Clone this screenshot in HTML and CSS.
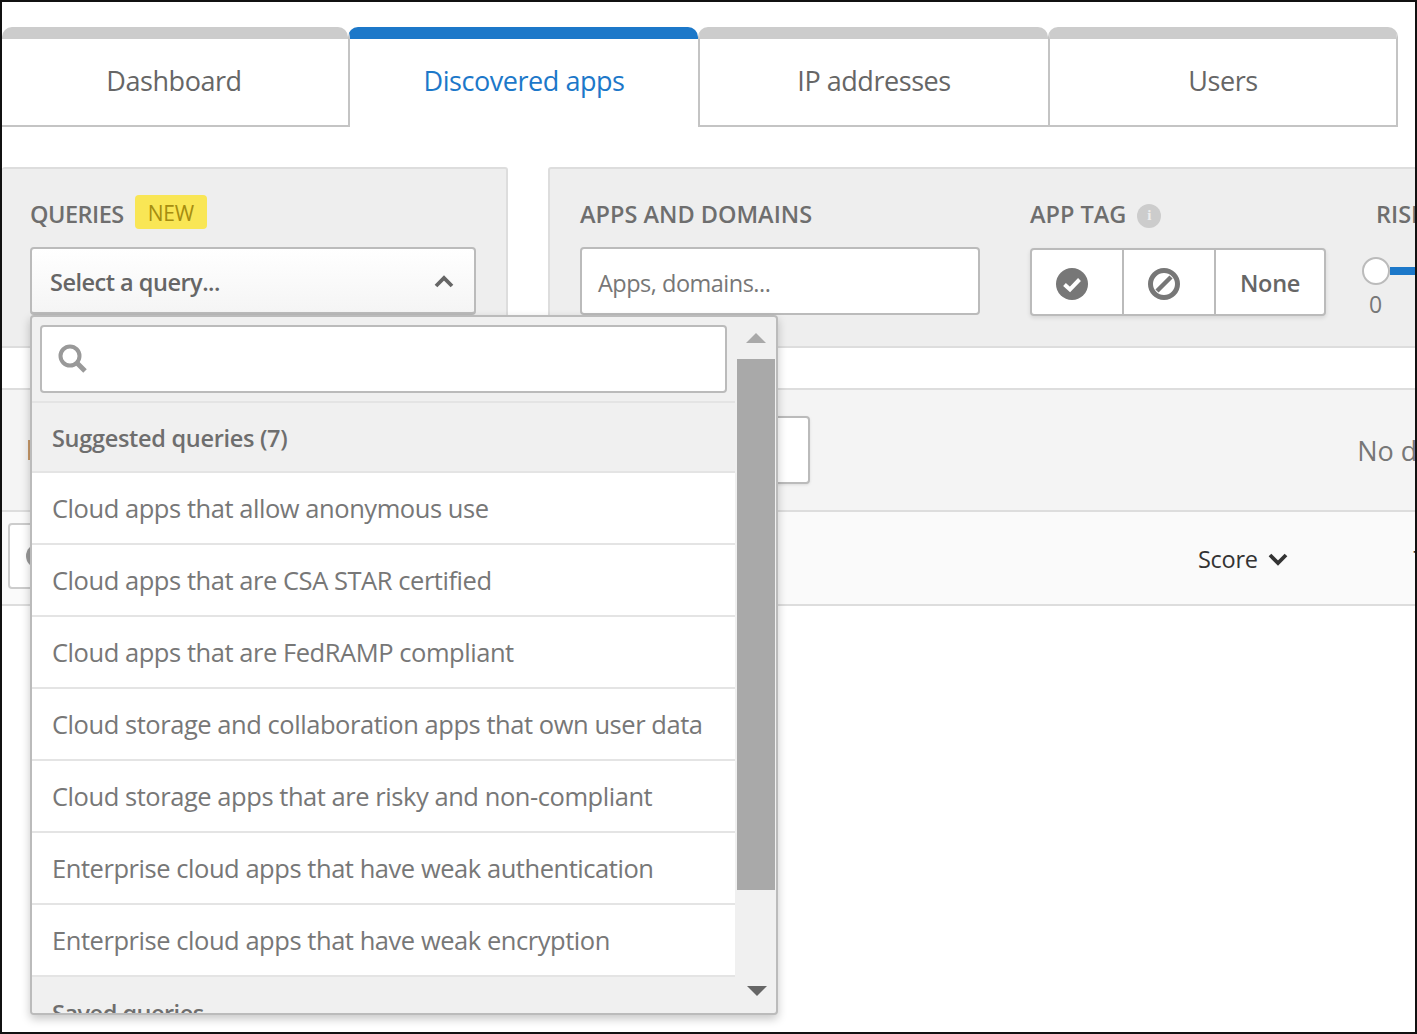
FILE: index.html
```html
<!DOCTYPE html>
<html lang="en">
<head>
    <meta charset="UTF-8">
    <meta name="viewport" content="width=device-width, initial-scale=1.0">
    <title>Discovered apps</title>
    <link rel="stylesheet" href="styles.css">
</head>
<body>
    <div class="frame">
        <nav class="tabs">
            <a class="tab first">Dashboard</a>
            <a class="tab active">Discovered apps</a>
            <a class="tab">IP addresses</a>
            <a class="tab last">Users</a>
        </nav>

        <section class="filters">
            <div class="panel panel-queries">
                <div class="label-row queries-label">
                    <span class="label label-tight">QUERIES</span>
                    <span class="new-badge">NEW</span>
                </div>
                <div class="query-select">
                    <span>Select a query...</span>
                    <svg class="chevron" width="20" height="13" viewBox="0 0 20 13"><path d="M2 11 L10 3 L18 11" fill="none" stroke="#666" stroke-width="3.8"/></svg>
                </div>
            </div>
            <div class="panel panel-apps">
                <div class="field field-apps">
                    <span class="label">APPS AND DOMAINS</span>
                    <div class="text-input">Apps, domains...</div>
                </div>
                <div class="field field-tag">
                    <div class="label-row tag-label">
                        <span class="label">APP TAG</span>
                        <span class="info">i</span>
                    </div>
                    <div class="tag-group">
                        <div class="tag-btn tag-check">
                            <svg width="32" height="32" viewBox="0 0 32 32"><circle cx="16" cy="16" r="16" fill="#777"/><path d="M8.5 16.5 L14 21.5 L23.5 11.5" fill="none" stroke="#fff" stroke-width="4"/></svg>
                        </div>
                        <div class="tag-btn tag-check">
                            <svg width="32" height="32" viewBox="0 0 32 32"><circle cx="16" cy="16" r="13.5" fill="none" stroke="#777" stroke-width="5"/><path d="M9 23 L23 9" stroke="#777" stroke-width="4.5"/></svg>
                        </div>
                        <div class="tag-btn tag-none">None</div>
                    </div>
                </div>
                <div class="field field-risk">
                    <span class="label">RISK SCORE</span>
                    <div class="slider">
                        <span class="knob"></span>
                        <span class="track"></span>
                    </div>
                    <span class="slider-min">0</span>
                </div>
            </div>
        </section>

        <section class="toolbar">
            <span class="toolbar-tick"></span>
            <div class="toolbar-box"></div>
            <span class="no-data">No data</span>
        </section>

        <section class="table-head">
            <div class="head-box"><span class="head-circle"></span></div>
            <div class="head-score">Score
                <svg width="20" height="14" viewBox="0 0 20 14"><path d="M2 3 L10 11 L18 3" fill="none" stroke="#333" stroke-width="3.8"/></svg>
            </div>
            <span class="head-next">T</span>
        </section>

        <div class="dropdown">
            <div class="dropdown-scroll">
                <div class="search-wrap">
                    <div class="search-box">
                        <svg width="32" height="30" viewBox="0 0 32 30"><circle cx="13" cy="12" r="9.5" fill="none" stroke="#999" stroke-width="4"/><path d="M19.5 18.5 L28 27" stroke="#999" stroke-width="5"/></svg>
                    </div>
                </div>
                <div class="group-title">Suggested queries (7)</div>
                <div class="option">Cloud apps that allow anonymous use</div>
                <div class="option">Cloud apps that are CSA STAR certified</div>
                <div class="option">Cloud apps that are FedRAMP compliant</div>
                <div class="option">Cloud storage and collaboration apps that own user data</div>
                <div class="option">Cloud storage apps that are risky and non-compliant</div>
                <div class="option">Enterprise cloud apps that have weak authentication</div>
                <div class="option">Enterprise cloud apps that have weak encryption</div>
                <div class="group-title saved">Saved queries</div>
            </div>
            <div class="scrollbar">
                <span class="arrow-up"></span>
                <span class="thumb"></span>
                <span class="arrow-down"></span>
            </div>
        </div>
    </div>
</body>
</html>
```

FILE: styles.css
```css
* {
    box-sizing: border-box;
}

html, body {
    margin: 0;
    padding: 0;
}

body {
    font-family: "Open Sans", "Noto Sans", sans-serif;
    background-color: #fff;
    color: #666;
}

.frame {
    position: relative;
    width: 1417px;
    height: 1034px;
    overflow: hidden;
    background-color: #fff;
    border: 2px solid #111;
    padding-top: 25px;
}

/* tabs */
.tabs {
    display: flex;
    height: 100px;
}

.tab {
    width: 350px;
    height: 100px;
    flex: none;
    display: flex;
    align-items: center;
    justify-content: center;
    padding-bottom: 4px;
    font-size: 27px;
    letter-spacing: -0.45px;
    color: #666;
    background-color: #fff;
    border-top: 12px solid #ccc;
    border-left: 2px solid #c4c4c4;
    border-bottom: 2px solid #c4c4c4;
    border-radius: 10px 10px 0 0;
}

.tab.first {
    width: 346px;
    padding-right: 2px;
    border-left: 0;
}

.tab.last {
    border-right: 2px solid #c4c4c4;
}

.tab.active {
    color: #1c78c9;
    border-top-color: #1c78c9;
    border-bottom: 0;
    padding-bottom: 6px;
}

/* filter panels */
.filters {
    display: flex;
    gap: 40px;
    margin-top: 40px;
    height: 181px;
}

.panel {
    flex: none;
    background-color: #eee;
    border: 2px solid #ddd;
    border-radius: 3px 3px 0 0;
    display: flex;
}

.panel-queries {
    width: 506px;
    flex-direction: column;
    padding: 26px 30px 0 28px;
    border-left: 0;
}

.panel-apps {
    width: 900px;
    padding: 0 0 0 30px;
}

.label {
    font-size: 23.5px;
    font-weight: 600;
    letter-spacing: 0;
    line-height: 32px;
    color: #6e6e6e;
    white-space: nowrap;
}

.label-tight {
    letter-spacing: -0.5px;
    margin-top: 3px;
}

.label-row {
    display: flex;
    align-items: center;
    gap: 10px;
}

.queries-label {
    align-items: flex-start;
}

.new-badge {
    height: 34px;
    padding: 2px 13px 0;
    margin-left: 1px;
    display: flex;
    align-items: center;
    background-color: #f9e655;
    color: #a68d10;
    font-size: 21px;
    letter-spacing: -0.3px;
    border-radius: 4px;
}

.query-select {
    margin-top: 17px;
    height: 68px;
    padding: 2px 20px 0 18px;
    display: flex;
    align-items: center;
    justify-content: space-between;
    background: linear-gradient(#fff, #f5f5f5);
    border: 2px solid #bbb;
    border-bottom-width: 3px;
    border-radius: 4px;
    font-size: 23.5px;
    font-weight: 600;
    letter-spacing: -0.5px;
}

.field {
    flex: none;
    display: flex;
    flex-direction: column;
    padding-top: 29px;
}

.field-apps {
    width: 450px;
}

.text-input {
    margin-top: 17px;
    width: 400px;
    height: 68px;
    padding: 3px 0 0 16px;
    display: flex;
    align-items: center;
    background-color: #fff;
    border: 2px solid #bbb;
    border-radius: 4px;
    font-size: 23.5px;
    letter-spacing: -0.5px;
    color: #777;
}

.field-tag {
    width: 346px;
}

.tag-label {
    height: 32px;
}

.info {
    width: 24px;
    height: 24px;
    margin: 3px 0 0 1px;
    border-radius: 50%;
    background-color: #ccc;
    color: #eee;
    font-family: "Liberation Serif", serif;
    font-size: 15px;
    font-weight: 700;
    display: flex;
    align-items: center;
    justify-content: center;
}

.tag-group {
    margin-top: 18px;
    width: 296px;
    height: 68px;
    display: flex;
    background-color: #fff;
    border: 2px solid #bbb;
    border-radius: 4px;
    box-shadow: 0 2px 4px rgba(0, 0, 0, 0.1);
}

.tag-btn {
    display: flex;
    align-items: center;
    justify-content: center;
    border-right: 2px solid #bbb;
}

.tag-check {
    width: 92px;
    padding: 3px 10px 0 0;
}

.tag-none {
    flex: 1;
    padding-top: 2px;
    border-right: 0;
    font-size: 23.5px;
    font-weight: 600;
    letter-spacing: -0.3px;
}

.field-risk {
    width: 200px;
}

.slider {
    display: flex;
    align-items: center;
    margin: 27px 0 0 -14px;
    height: 28px;
}

.knob {
    width: 28px;
    height: 28px;
    flex: none;
    background-color: #fff;
    border: 2px solid #bbb;
    border-radius: 50%;
}

.track {
    flex: 1;
    height: 8px;
    background-color: #1c78c9;
}

.slider-min {
    margin: 3px 0 0 -7px;
    font-size: 23px;
    line-height: 32px;
    color: #777;
}

/* area under the filters */
.toolbar {
    position: relative;
    margin-top: 40px;
    height: 124px;
    display: flex;
    align-items: center;
    background-color: #f4f4f4;
    border-top: 2px solid #ddd;
    border-bottom: 2px solid #ddd;
}

.toolbar-tick {
    width: 3px;
    height: 20px;
    margin-left: 26px;
    background-color: #c89a6a;
}

.toolbar-box {
    position: absolute;
    left: 740px;
    top: 26px;
    width: 68px;
    height: 68px;
    background-color: #fff;
    border: 2px solid #bbb;
    border-radius: 4px;
    box-shadow: 0 1px 3px rgba(0, 0, 0, 0.1);
}

.no-data {
    margin-left: auto;
    margin-right: -42px;
    font-size: 27px;
    color: #777;
    white-space: nowrap;
}

.table-head {
    height: 94px;
    display: flex;
    align-items: center;
    background-color: #fafafa;
    border-bottom: 2px solid #ddd;
}

.head-box {
    width: 60px;
    height: 66px;
    flex: none;
    margin: 0 0 4px 6px;
    padding-left: 16px;
    display: flex;
    align-items: center;
    background-color: #fff;
    border: 2px solid #ccc;
    border-radius: 4px;
}

.head-circle {
    width: 24px;
    height: 24px;
    border-radius: 50%;
    background-color: #999;
}

.head-score {
    margin: 2px 0 0 1130px;
    display: flex;
    align-items: center;
    gap: 10px;
    font-size: 23.5px;
    letter-spacing: -0.3px;
    color: #333;
}

.head-next {
    margin: 2px 0 0 126px;
    font-size: 23.5px;
    color: #333;
}

/* open query dropdown */
.dropdown {
    position: absolute;
    left: 28px;
    top: 313px;
    width: 748px;
    height: 700px;
    display: flex;
    overflow: hidden;
    background-color: #f0f0f0;
    border: 2px solid #bbb;
    border-radius: 4px;
    box-shadow: 0 4px 10px rgba(0, 0, 0, 0.22);
}

.dropdown-scroll {
    width: 703px;
    flex: none;
}

.search-wrap {
    height: 86px;
    padding: 8px 8px 0 8px;
    border-bottom: 2px solid #e4e4e4;
}

.search-box {
    height: 68px;
    padding: 17px 0 0 15px;
    background-color: #fff;
    border: 2px solid #bbb;
    border-radius: 4px;
}

.search-box svg {
    display: block;
}

.group-title {
    height: 70px;
    padding: 2px 20px 0;
    display: flex;
    align-items: center;
    font-size: 23.5px;
    font-weight: 600;
    letter-spacing: -0.3px;
    color: #6e6e6e;
    background-color: #f0f0f0;
    border-bottom: 2px solid #e4e4e4;
}

.group-title.saved {
    height: 72px;
    padding-top: 0;
    letter-spacing: -0.5px;
    border-bottom: 0;
}

.option {
    height: 72px;
    padding: 0 20px;
    display: flex;
    align-items: center;
    font-size: 25.5px;
    letter-spacing: -0.45px;
    color: #777;
    background-color: #fff;
    white-space: nowrap;
    border-bottom: 2px solid #e4e4e4;
}

.scrollbar {
    flex: 1;
    position: relative;
}

.thumb {
    position: absolute;
    left: 2px;
    right: 1px;
    top: 42px;
    height: 531px;
    background-color: #a9a9a9;
}

.arrow-up, .arrow-down {
    position: absolute;
    left: 11px;
    width: 0;
    height: 0;
    border-left: 10px solid transparent;
    border-right: 10px solid transparent;
}

.arrow-up {
    top: 16px;
    border-bottom: 10px solid #a9a9a9;
}

.arrow-down {
    bottom: 17px;
    left: 12px;
    border-top: 10px solid #666;
}
```
